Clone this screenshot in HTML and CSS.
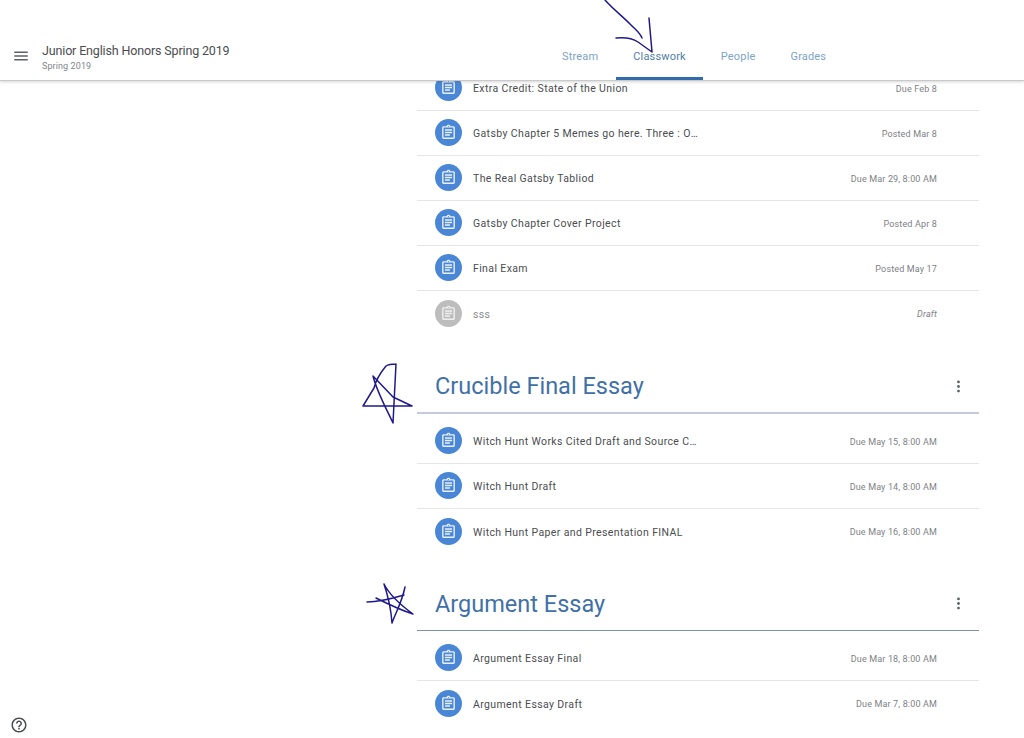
FILE: index.html
```html
<!DOCTYPE html>
<html lang="en">
<head>
<meta charset="utf-8">
<title>Classwork</title>
<link rel="stylesheet" href="styles.css">
</head>
<body>
<svg class="defs" width="0" height="0" aria-hidden="true">
  <symbol id="assign" viewBox="0 0 24 24">
    <path d="M19 3h-4.200C14.400 1.800 13.300 1 12 1s-2.400.8-2.800 2H5c-1.100 0-2 .9-2 2v14c0 1.100.9 2 2 2h14c1.100 0 2-.9 2-2V5c0-1.100-.9-2-2-2zm-7-.2c.4 0 .8.400.8.800s-.4.800-.8.800-.8-.400-.8-.800.400-.800.800-.800zM19 19H5V5h14v14zM7 7.500h10v2H7zm0 3.500h10v2H7zm0 3.500h7v2H7z" fill="currentColor"/>
  </symbol>
</svg>

<header class="topbar">
  <div class="brand">
    <svg class="menu" viewBox="0 0 24 24" aria-hidden="true"><path d="M3 18h18v-2H3v2zm0-5h18v-2H3v2zm0-7v2h18V6H3z" fill="currentColor"/></svg>
    <div class="class-name">
      <div class="class-title">Junior English Honors Spring 2019</div>
      <div class="class-sub">Spring 2019</div>
    </div>
  </div>
  <nav class="tabs">
    <a class="tab">Stream</a>
    <a class="tab tab-active">Classwork</a>
    <a class="tab">People</a>
    <a class="tab">Grades</a>
  </nav>
</header>

<main class="content">
  <section class="topic">
    <ul class="items items-first">
      <li class="item"><span class="badge"><svg><use href="#assign"/></svg></span><span class="item-title">Extra Credit: State of the Union</span><span class="item-date">Due Feb 8</span></li>
      <li class="item"><span class="badge"><svg><use href="#assign"/></svg></span><span class="item-title">Gatsby Chapter 5 Memes go here. Three : One Ratio of Memes</span><span class="item-date">Posted Mar 8</span></li>
      <li class="item"><span class="badge"><svg><use href="#assign"/></svg></span><span class="item-title">The Real Gatsby Tabliod</span><span class="item-date">Due Mar 29, 8:00 AM</span></li>
      <li class="item"><span class="badge"><svg><use href="#assign"/></svg></span><span class="item-title">Gatsby Chapter Cover Project</span><span class="item-date">Posted Apr 8</span></li>
      <li class="item"><span class="badge"><svg><use href="#assign"/></svg></span><span class="item-title">Final Exam</span><span class="item-date">Posted May 17</span></li>
      <li class="item item-draft"><span class="badge"><svg><use href="#assign"/></svg></span><span class="item-title">sss</span><span class="item-date">Draft</span></li>
    </ul>
  </section>

  <section class="topic">
    <div class="topic-head topic-head-light">
      <h2 class="topic-title">Crucible Final Essay</h2>
      <svg class="more" viewBox="0 0 24 24" aria-hidden="true"><circle cx="12" cy="5.500" r="2"/><circle cx="12" cy="12" r="2"/><circle cx="12" cy="18.500" r="2"/></svg>
    </div>
    <ul class="items">
      <li class="item"><span class="badge"><svg><use href="#assign"/></svg></span><span class="item-title">Witch Hunt Works Cited Draft and Source Cards Submission</span><span class="item-date">Due May 15, 8:00 AM</span></li>
      <li class="item"><span class="badge"><svg><use href="#assign"/></svg></span><span class="item-title">Witch Hunt Draft</span><span class="item-date">Due May 14, 8:00 AM</span></li>
      <li class="item item-last"><span class="badge"><svg><use href="#assign"/></svg></span><span class="item-title item-title-wide">Witch Hunt Paper and Presentation FINAL</span><span class="item-date">Due May 16, 8:00 AM</span></li>
    </ul>
  </section>

  <section class="topic">
    <div class="topic-head">
      <h2 class="topic-title">Argument Essay</h2>
      <svg class="more" viewBox="0 0 24 24" aria-hidden="true"><circle cx="12" cy="5.500" r="2"/><circle cx="12" cy="12" r="2"/><circle cx="12" cy="18.500" r="2"/></svg>
    </div>
    <ul class="items">
      <li class="item"><span class="badge"><svg><use href="#assign"/></svg></span><span class="item-title">Argument Essay Final</span><span class="item-date">Due Mar 18, 8:00 AM</span></li>
      <li class="item item-last"><span class="badge"><svg><use href="#assign"/></svg></span><span class="item-title">Argument Essay Draft</span><span class="item-date">Due Mar 7, 8:00 AM</span></li>
    </ul>
  </section>
</main>

<svg class="ink" viewBox="0 0 1024 738" aria-hidden="true">
  <path d="M605 0C612 8 622 16 630 24S640 33 642 38"/>
  <path d="M616 38C625 37 632 38 638 42L652 52L649 18"/>
  <path d="M396 364C392 364 389 364 386 366C381 372 376 380 374 388L363 406H412L393 397L373 376C377 392 386 408 393 423L396 364"/>
  <path d="M367 602C380 602 394 598 404 595M405 587C402 602 396 612 392 623C391 608 388 596 384 584C390 596 402 606 413 614C400 610 388 604 376 598"/>
</svg>

<svg class="help" viewBox="0 0 24 24" aria-hidden="true"><path d="M11 18h2v-2h-2v2zm1-16C6.480 2 2 6.480 2 12s4.480 10 10 10 10-4.480 10-10S17.520 2 12 2zm0 18c-4.410 0-8-3.590-8-8s3.590-8 8-8 8 3.590 8 8-3.590 8-8 8zm0-14c-2.210 0-4 1.790-4 4h2c0-1.100.9-2 2-2s2 .9 2 2c0 2-3 1.750-3 5h2c0-2.250 3-2.500 3-5 0-2.210-1.790-4-4-4z" fill="currentColor"/></svg>
```

FILE: styles.css
```css
* { box-sizing: border-box; }
html, body { margin: 0; height: 100%; }
body {
  position: relative;
  width: 1024px;
  height: 738px;
  overflow: hidden;
  background: #fff;
  font-family: Roboto, "Liberation Sans", sans-serif;
  color: #3c4043;
}
.defs { position: absolute; }

.topbar {
  position: relative;
  z-index: 2;
  display: flex;
  align-items: flex-end;
  height: 81px;
  background: #fff;
  border-bottom: 1px solid #c9c9c9;
  box-shadow: 0 1px 3px rgba(60, 64, 67, .22);
}
.brand {
  flex: 0 0 545px;
  display: flex;
  align-items: center;
  gap: 12px;
  padding: 0 0 8px 12px;
}
.menu { width: 18px; height: 18px; margin-bottom: 2px; color: #5f6368; }
.class-title { font-size: 12.500px; line-height: 18px; letter-spacing: -.15px; color: #4a4d50; }
.class-sub { font-size: 9px; line-height: 12px; letter-spacing: .1px; color: #80868b; }

.tabs { display: flex; gap: 1px; }
.tab {
  height: 46px;
  padding: 16px 17px 0;
  font-size: 11px;
  line-height: 13px;
  letter-spacing: .17px;
  color: #7ea3c8;
  border-bottom: 3px solid transparent;
}
.tab-active {
  color: #4f7ea9;
  border-bottom-color: #2f6bad;
  border-radius: 3px 3px 0 0;
}

.content { margin: -15px 0 0 417px; width: 562px; }
.items { list-style: none; margin: 5px 0 0; padding: 0; }
.items-first { margin-top: 0; padding-bottom: 1px; }
.item {
  display: flex;
  align-items: center;
  height: 45px;
  padding: 0 42px 1px 18px;
  border-bottom: 1px solid #e6e6e6;
}
.item-draft, .item-last { border-bottom: 0; }
.badge {
  flex: none;
  display: flex;
  align-items: center;
  justify-content: center;
  width: 27px;
  height: 27px;
  border-radius: 50%;
  background: #4a86d6;
  color: #e8f0fb;
}
.badge svg { width: 17px; height: 17px; }
.item-draft .badge { background: #bdbdbd; color: #efefef; }
.item-title {
  margin-left: 11px;
  max-width: 228px;
  padding-top: 2px;
  overflow: hidden;
  white-space: nowrap;
  text-overflow: ellipsis;
  font-size: 10.500px;
  letter-spacing: .38px;
  color: #4a4d50;
}
.item-title-wide { max-width: 260px; }
.item-draft .item-title { color: #8a8d90; }
.item-date {
  margin-left: auto;
  padding-top: 2px;
  font-size: 9px;
  letter-spacing: .15px;
  color: #7d8185;
}
.item-draft .item-date { font-style: italic; }

.topic-head {
  display: flex;
  align-items: center;
  justify-content: space-between;
  height: 54px;
  margin-top: 23px;
  padding: 0 12px 0 18px;
  border-bottom: 1px solid #7f8ea3;
}
.topic-head-light { border-bottom: 2px solid #c6c9e4; }
.topic-title {
  margin: 0;
  font-size: 23.500px;
  font-weight: 400;
  line-height: 30px;
  color: #3f71a8;
}
.more { width: 17px; height: 17px; fill: #5f6368; }

.ink {
  position: absolute;
  inset: 0;
  z-index: 3;
  width: 1024px;
  height: 738px;
  pointer-events: none;
  fill: none;
  stroke: #1f1a8c;
  stroke-width: 1.500;
  stroke-linejoin: round;
  stroke-linecap: round;
}
.help {
  position: absolute;
  left: 10px;
  top: 716px;
  width: 18px;
  height: 18px;
  color: #4a4d50;
}
```
